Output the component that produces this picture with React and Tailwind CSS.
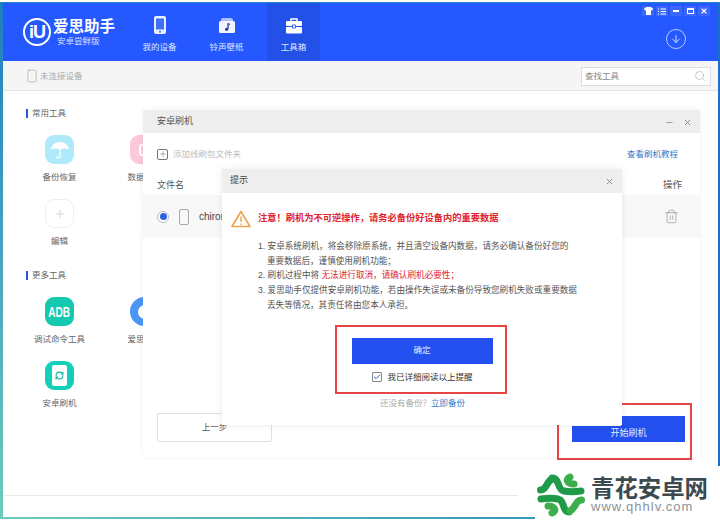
import React from 'react';
import { Smartphone, ArrowDown, Search, Minus, X, Plus, Trash2, RefreshCw, Check } from 'lucide-react';

const font = { fontFamily: '"Liberation Sans","Noto Sans CJK SC",sans-serif' };

function NavItem({ icon, label, active }) {
  return (
    <div className={`w-[53px] h-full flex flex-col items-center pt-[11px] ${active ? 'bg-[#2350e6]' : ''}`}>
      <div className="h-[22px] flex items-center justify-center">{icon}</div>
      <div className="mt-[5px] text-[8.5px] leading-[12px] text-[#dfe8ff] whitespace-nowrap">{label}</div>
    </div>
  );
}

function PhoneIcon() {
  return (
    <svg width="14" height="20" viewBox="0 0 14 20">
      <rect x="1" y="1" width="12" height="18" rx="2" fill="#e8efff" />
      <rect x="3" y="3.5" width="8" height="11" fill="#3f70f5" />
      <circle cx="7" cy="16.7" r="1" fill="#3f70f5" />
    </svg>
  );
}

function RingIcon() {
  return (
    <svg width="18" height="17" viewBox="0 0 18 17">
      <path d="M3 3 Q3 1 5 1 H13 Q15 1 15 3 V4 H3 Z" fill="#a9c2ff" />
      <rect x="1" y="4" width="16" height="12" rx="1.5" fill="#f2f5ff" />
      <path d="M10 6.5 V12" stroke="#1f3fa8" strokeWidth="1.3" />
      <path d="M10 6.5 L12 7.5" stroke="#1f3fa8" strokeWidth="1.3" />
      <circle cx="8.6" cy="12.3" r="1.6" fill="#1f3fa8" />
    </svg>
  );
}

function BoxIcon() {
  return (
    <svg width="18" height="17" viewBox="0 0 18 17">
      <path d="M6 4 V2 H12 V4" stroke="#fff" strokeWidth="1.5" fill="none" />
      <rect x="1" y="4" width="16" height="5" rx="1" fill="#fff" />
      <rect x="1" y="10" width="16" height="6.5" rx="1" fill="#fff" />
      <rect x="7.5" y="8" width="3" height="3" fill="#fff" stroke="#2350e6" strokeWidth="0.8" />
    </svg>
  );
}

function UmbrellaIcon() {
  return (
    <svg width="20" height="20" viewBox="0 0 20 20">
      <path d="M1 9.5 C2 4 6 2 10 2 C14 2 18 4 19 9.5 C16 8 13 8.5 10 9.5 C7 8.5 4 8 1 9.5 Z" fill="#fff" />
      <path d="M10 9 V16 Q10 18 8 18 Q6.5 18 6.5 16.5" stroke="#fff" strokeWidth="1.2" fill="none" strokeLinecap="round" />
    </svg>
  );
}

function Section({ title, className = '', children }) {
  return (
    <div className={className}>
      <div className="flex items-center h-[10px] pl-[23px]">
        <div className="w-[2px] h-[9px] bg-[#2c56d8]" />
        <div className="ml-[4px] text-[8.5px] leading-[10px] text-[#666] whitespace-nowrap">{title}</div>
      </div>
      <div className="grid grid-cols-[85px_85px] ml-[14px] mt-[17px] gap-y-[16px]">{children}</div>
    </div>
  );
}

function Tool({ label, tile, children }) {
  return (
    <div className="flex flex-col items-center">
      <div className={`w-[29px] h-[29px] rounded-[9px] flex items-center justify-center ${tile}`}>{children}</div>
      <div className="mt-[7px] text-[8.5px] leading-[12px] text-[#666] whitespace-nowrap">{label}</div>
    </div>
  );
}

function WatermarkLogo() {
  return (
    <svg width="50" height="48" viewBox="0 0 50 48" fill="none" strokeLinecap="round">
      <g stroke="#1f9a48" strokeWidth="7">
        <path d="M4.5 19 C11 19 10 11 16 8" />
        <path d="M16 7 C24 7 21 19 28 20 C33 21 38 21 45 20" />
        <path d="M33 41 C26 41 29 29 22 28 C17 27 12 27 5 28" />
      </g>
      <g stroke="#3cae4c" strokeWidth="7">
        <path d="M34 6 C29 8 31 13 38 13" />
        <path d="M45.5 29 C39 29 40 37 34 40" />
        <path d="M16 42 C21 40 19 35 12 35" />
      </g>
      <g fill="#fff">
        <circle cx="25" cy="24" r="1.5" />
      </g>
    </svg>
  );
}

export default function App() {
  return (
    <div style={font} className="relative w-[720px] h-[521px] overflow-hidden bg-white pt-[2px]">
      <div className="h-[517px] flex flex-col border-t border-[#1c86c4]">
        <div className="flex-1 flex min-h-0">
          <div className="w-[3px] bg-gradient-to-b from-[#1b7fc0] to-[#6fcabc]" />
          <div className="flex-1 flex flex-col min-w-0">
            {/* Header */}
            <header className="h-[58px] bg-[#2558ff] flex relative shrink-0">
              <div className="w-[130px] flex items-center pl-[20px]">
                <div className="w-[28px] h-[28px] rounded-full border-[2px] border-white flex items-center justify-center text-white font-bold text-[18px] leading-none tracking-[-1px]">iU</div>
                <div className="ml-[2px] flex flex-col">
                  <div className="text-[15.5px] leading-[18px] font-bold text-white whitespace-nowrap">爱思助手</div>
                  <div className="ml-[4px] text-[8.5px] leading-[11px] text-[#d5e0ff] whitespace-nowrap">安卓尝鲜版</div>
                </div>
              </div>
              <NavItem label="我的设备" icon={<PhoneIcon />} />
              <div className="w-[14px]" />
              <NavItem label="铃声壁纸" icon={<RingIcon />} />
              <div className="w-[14px]" />
              <NavItem active label="工具箱" icon={<BoxIcon />} />
              <div className="absolute right-[8px] top-[3px] flex h-[10px] gap-[2px] text-white">
                <div className="w-[12px] bg-[#3a68ff] flex items-center justify-center">
                  <svg width="9" height="8" viewBox="0 0 9 8"><path d="M0 1.5 L2.5 0 H6.5 L9 1.5 L8 3.5 H7 V8 H2 V3.5 H1 Z" fill="#fff" /></svg>
                </div>
                <div className="w-[12px] bg-[#3a68ff] flex items-center justify-center">
                  <svg width="8" height="7" viewBox="0 0 8 7"><path d="M0 1 H1 M2.5 1 H8 M0 3.5 H1 M2.5 3.5 H8 M0 6 H1 M2.5 6 H8" stroke="#fff" strokeWidth="1" /></svg>
                </div>
                <div className="w-[12px] bg-[#3a68ff] flex items-center justify-center">
                  <div className="w-[6px] h-[2px] bg-white" />
                </div>
                <div className="w-[12px] bg-[#3a68ff] flex items-center justify-center">
                  <div className="w-[7px] h-[6px] border border-white border-t-2" />
                </div>
                <div className="w-[12px] bg-[#3a68ff] flex items-center justify-center">
                  <X size={8} strokeWidth={3.5} />
                </div>
              </div>
              <div className="absolute right-[32px] top-[26px] w-[20px] h-[20px] rounded-full border border-[#b9ccff] flex items-center justify-center text-[#cfdcff]">
                <ArrowDown size={12} />
              </div>
            </header>
            {/* Toolbar */}
            <div className="h-[30px] shrink-0 bg-[#f5f5f5] border-b border-[#e4e4e4] flex items-center pl-[22px] pr-[7px] pt-[1px]">
              <Smartphone size={14} strokeWidth={1} className="text-[#999]" />
              <div className="ml-[1px] text-[8.5px] text-[#aaa]">未连接设备</div>
              <div className="ml-auto w-[130px] h-[19px] border border-[#ddd] bg-white flex items-center justify-between pl-[3px] pr-[4px]">
                <span className="text-[8.5px] text-[#888]">查找工具</span>
                <Search size={12} strokeWidth={1} className="text-[#999]" />
              </div>
            </div>
            {/* Content */}
            <div className="flex-1 bg-white pt-[17px] min-h-0">
              <Section title="常用工具">
                <Tool label="备份恢复" tile="bg-[#aeeafa]"><UmbrellaIcon /></Tool>
                <Tool label="数据迁移" tile="bg-[#fbc9d8]"><div className="w-[12px] h-[12px] rounded-[3px] border-2 border-white" /></Tool>
                <Tool label="编辑" tile="bg-white border border-[#eee]"><Plus size={14} strokeWidth={1} className="text-[#bbb]" /></Tool>
              </Section>
              <Section title="更多工具" className="mt-[23px]">
                <Tool label="调试命令工具" tile="bg-[#14c9b0]"><span className="text-white font-bold text-[14px] leading-none scale-x-[0.72]">ADB</span></Tool>
                <Tool label="爱思回收" tile="bg-[#4a95f5] rounded-full"><div className="w-[14px] h-[14px] rounded-full bg-white" /></Tool>
                <Tool label="安卓刷机" tile="bg-[#14d0b8]">
                  <div className="w-[15px] h-[21px] rounded-[2px] bg-white flex items-center justify-center">
                    <RefreshCw size={9} strokeWidth={3} className="text-[#14b8a0]" />
                  </div>
                </Tool>
              </Section>
            </div>
            <div className="h-[22px] shrink-0">
              <div className="mr-[200px] h-px bg-[#e8e8e8]" />
            </div>
          </div>
          <div className="w-[2px] bg-[#1b6fc4]" />
        </div>
        <div className="h-[2px] bg-gradient-to-r from-[#6fcabc] to-[#1b86b4]" />
      </div>

      {/* Flash panel */}
      <div className="absolute left-[143px] top-[110px] w-[557px] h-[347px] bg-white shadow-[0_0_6px_rgba(0,0,0,0.06)] flex flex-col">
        <div className="h-[23px] bg-[#eeeeee] flex items-center pl-[14px] pr-[8px] pt-[1px]">
          <span className="text-[9px] text-[#555]">安卓刷机</span>
          <Minus size={9} className="ml-auto text-[#888]" strokeWidth={2} />
          <X size={9} className="ml-[9px] text-[#888]" strokeWidth={2.5} />
        </div>
        <div className="h-[42px] flex items-center pl-[14px] pr-[22px]">
          <div className="w-[11px] h-[11px] border border-[#777] rounded-[2px] flex items-center justify-center">
            <Plus size={8} strokeWidth={1.5} className="text-[#666]" />
          </div>
          <span className="ml-[5px] text-[8.5px] text-[#bbb]">添加线刷包文件夹</span>
          <span className="ml-auto text-[8.5px] text-[#3478c8]">查看刷机教程</span>
        </div>
        <div className="h-[20px] flex items-center pl-[14px] pr-[18px] pt-[1px]">
          <span className="text-[9px] text-[#555]">文件名</span>
          <span className="ml-auto text-[9.5px] text-[#555]">操作</span>
        </div>
        <div className="h-[43px] bg-[#f8f8f8] flex items-center pl-[14px] pr-[21px]">
          <div className="w-[12px] h-[12px] rounded-full border border-[#bbb] flex items-center justify-center bg-white">
            <div className="w-[7px] h-[7px] rounded-full bg-[#2c62dc]" />
          </div>
          <div className="ml-[10px] w-[10px] h-[16px] border border-[#aaa] rounded-[2px]" />
          <span className="ml-[10px] text-[10px] text-[#444]">chiron</span>
          <Trash2 size={15} strokeWidth={1} className="ml-auto text-[#888]" />
        </div>
        <div className="mt-auto h-[58px] flex items-center pl-[14px] pb-[1px]">
          <div className="w-[115px] h-[29px] border border-[#e0e0e0] rounded-[2px] flex items-center justify-center text-[8.5px] text-[#555]">上一步</div>
        </div>
      </div>

      {/* Start button */}
      <div className="absolute left-[621px] top-[416px] w-[64px] h-[11px] bg-[#2350ee]" />
      <div className="absolute left-[572px] top-[426px] w-[113px] h-[16px] bg-[#2350ee] flex items-center justify-center text-[9px] text-[#e4ebff]">开始刷机</div>
      <div className="absolute left-[557px] top-[403px] w-[135px] h-[57px] border-2 border-[#e64545]" />

      {/* Alert dialog */}
      <div className="absolute left-[222px] top-[169px] w-[400px] h-[256px] bg-white shadow-[0_0_8px_rgba(0,0,0,0.08)] flex flex-col">
        <div className="h-[24px] shrink-0 bg-[#eeeeee] flex items-center pl-[8px] pr-[8px]">
          <span className="text-[9px] text-[#444]">提示</span>
          <X size={9} className="ml-auto text-[#888]" strokeWidth={2.5} />
        </div>
        <div className="mt-[15px] h-[22px] shrink-0 flex items-center pl-[9px]">
          <svg width="20" height="18" viewBox="0 0 20 18" fill="none">
            <path d="M10 1.5 L19 16.5 H1 Z" stroke="#eea24a" strokeWidth="1.6" strokeLinejoin="round" />
            <path d="M10 6.5 V12 M10 13.5 V15" stroke="#eea24a" strokeWidth="1.4" />
          </svg>
          <span className="ml-[7px] text-[9.25px] font-bold text-[#e0242c] whitespace-nowrap">注意！刷机为不可逆操作，请务必备份好设备内的重要数据</span>
        </div>
        <div className="mt-[9px] ml-[36px] text-[8.6px] leading-[14.7px] text-[#555] whitespace-nowrap">
          <div>1. 安卓系统刷机，将会移除原系统，并且清空设备内数据，请务必确认备份好您的</div>
          <div className="pl-[9px]">重要数据后，谨慎使用刷机功能；</div>
          <div>2. 刷机过程中将 <span className="text-[#e0242c]">无法进行取消，请确认刷机必要性；</span></div>
          <div>3. 爱思助手仅提供安卓刷机功能，若由操作失误或未备份导致您刷机失败或重要数据</div>
          <div className="pl-[9px]">丢失等情况，其责任将由您本人承担。</div>
        </div>
        <div className="mt-[25px] shrink-0 mx-auto w-[141px] h-[26px] bg-[#2350ee] flex items-center justify-center text-[8.5px] text-[#e4ebff]">确定</div>
        <div className="mt-[7px] flex items-center justify-center ml-[1px]">
          <div className="w-[10px] h-[10px] border border-[#888] rounded-[1px] flex items-center justify-center">
            <Check size={8} strokeWidth={3} className="text-[#2c56c8]" />
          </div>
          <span className="ml-[5px] text-[8.5px] text-[#333] whitespace-nowrap">我已详细阅读以上提醒</span>
        </div>
        <div className="mt-[14px] text-center text-[8.5px] text-[#aaa] ml-[1px]">
          还没有备份？<span className="text-[#3478c8]">立即备份</span>
        </div>
      </div>
      <div className="absolute left-[335px] top-[325px] w-[172px] h-[69px] border-2 border-[#e64545]" />

      {/* Watermark */}
      <div className="absolute left-[535px] top-[466px] w-[185px] h-[55px] bg-white flex items-center pl-[1px] pt-[2px]">
        <WatermarkLogo />
        <div className="ml-[5px] flex flex-col">
          <div className="text-[23.4px] leading-[24px] font-bold text-[#3c4a50] whitespace-nowrap" style={{ fontFamily: '"Noto Sans CJK SC",sans-serif' }}>青花安卓网</div>
          <div className="text-[13px] leading-[15px] tracking-[1px] text-[#8a9499] whitespace-nowrap">www.qhhlv.com</div>
        </div>
      </div>
    </div>
  );
}
